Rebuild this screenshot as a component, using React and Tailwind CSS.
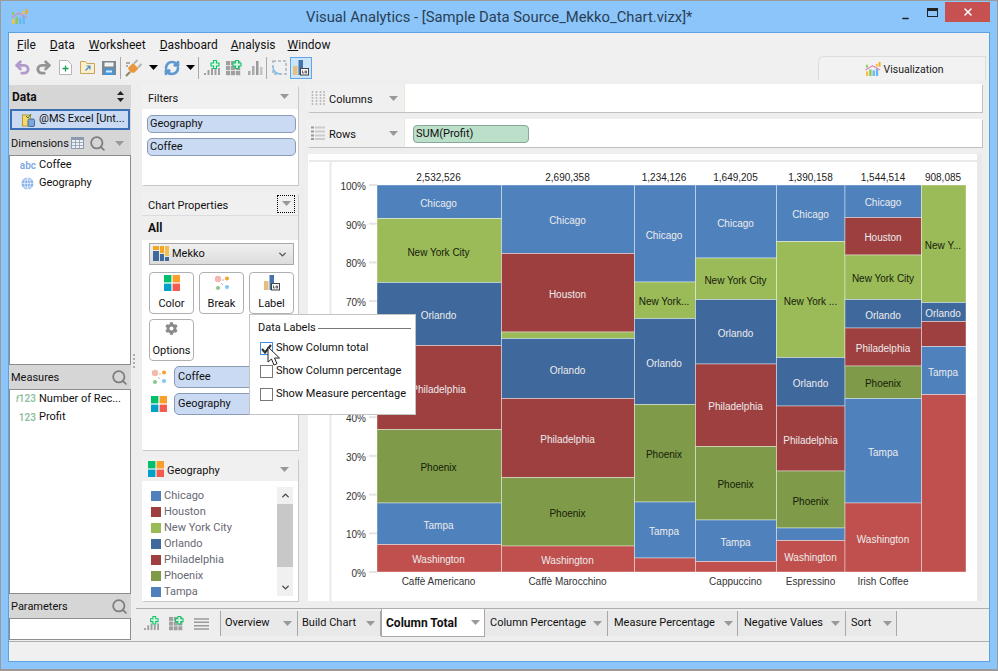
import { Search, Undo2, Redo2, RefreshCw, ChevronDown, ChevronUp, X, Minus } from 'lucide-react'
import { FaCog } from 'react-icons/fa'

// ── Chart data ─────────────────────────────────────
const cityColor = {
  Chicago:        '#4f81bd',
  Houston:        '#9d3f3f',
  'New York City':'#9bbb59',
  Orlando:        '#3f689c',
  Philadelphia:   '#9f4040',
  Phoenix:        '#7f9a48',
  Tampa:          '#4f81bd',
  Washington:     '#c0504d',
}

const darkText = ['New York City', 'Phoenix']

const columns = [
  { x0: 377, x1: 501.5, total: '2,532,526', cx: 438.5, name: 'Caffè Americano', segs: [
    [218.5, 'Chicago'], [282.5, 'New York City'], [345.5, 'Orlando'], [429.5, 'Philadelphia'],
    [503, 'Phoenix'], [544.5, 'Tampa'], [572, 'Washington'],
  ] },
  { x0: 501.5, x1: 634.5, total: '2,690,358', cx: 567.5, name: 'Caffè Marocchino', segs: [
    [253.5, 'Chicago'], [332, 'Houston'], [338.5, 'New York City', ''], [398.5, 'Orlando'],
    [477.5, 'Philadelphia'], [546, 'Phoenix'], [572, 'Washington'],
  ] },
  { x0: 634.5, x1: 695.5, total: '1,234,126', cx: 664, name: '', segs: [
    [282, 'Chicago'], [318.5, 'New York City', 'New York...'], [404.5, 'Orlando'], [502, 'Phoenix'],
    [558, 'Tampa'], [572, 'Washington', ''],
  ] },
  { x0: 695.5, x1: 776.5, total: '1,649,205', cx: 735.5, name: 'Cappuccino', segs: [
    [258, 'Chicago'], [299.5, 'New York City'], [364, 'Orlando'], [446.5, 'Philadelphia'],
    [520, 'Phoenix'], [561.5, 'Tampa'], [572, 'Washington', ''],
  ] },
  { x0: 776.5, x1: 845, total: '1,390,158', cx: 810.5, name: 'Espressino', segs: [
    [241.5, 'Chicago'], [357.5, 'New York City', 'New York ...'], [406, 'Orlando'], [471, 'Philadelphia'],
    [528, 'Phoenix'], [540.5, 'Tampa', ''], [572, 'Washington'],
  ] },
  { x0: 845, x1: 921.5, total: '1,544,514', cx: 883, name: 'Irish Coffee', segs: [
    [217.5, 'Chicago'], [255, 'Houston'], [299.5, 'New York City'], [328, 'Orlando'], [366, 'Philadelphia'],
    [398.5, 'Phoenix'], [503, 'Tampa'], [572, 'Washington'],
  ] },
  { x0: 921.5, x1: 966, total: '908,085', cx: 943, name: '', segs: [
    [302.5, 'New York City', 'New Y...'], [321.5, 'Orlando'], [346.5, 'Philadelphia', ''],
    [394.5, 'Tampa'], [572, 'Washington', ''],
  ] },
]

// 60% and 50% sit under the labels popup
const ticks = ['100%', '90%', '80%', '70%', '', '', '40%', '30%', '20%', '10%', '0%']

const legend = [
  ['Chicago', 'bg-[#4f81bd]'],
  ['Houston', 'bg-[#9d3f3f]'],
  ['New York City', 'bg-[#9bbb59]'],
  ['Orlando', 'bg-[#3f689c]'],
  ['Philadelphia', 'bg-[#9f4040]'],
  ['Phoenix', 'bg-[#7f9a48]'],
  ['Tampa', 'bg-[#4f81bd]'],
]

const tabs = [
  { label: 'Overview',           box: 'w-[77px] pl-[4px] pr-[5px]' },
  { label: 'Build Chart',        box: 'w-[83px] pl-[4px] pr-[5px]' },
  { label: 'Column Total',       box: 'w-[104px] pl-[4px] pr-[4px]', active: true },
  { label: 'Column Percentage',  box: 'w-[123px] pl-[5px] pr-[5px]' },
  { label: 'Measure Percentage', box: 'w-[130px] pl-[6px] pr-[4px]' },
  { label: 'Negative Values',    box: 'w-[108px] pl-[6px] pr-[5px]' },
  { label: 'Sort',               box: 'w-[51px] pl-[5px] pr-[4px]' },
]

// ── Small icons ────────────────────────────────────
function Caret({ className = 'text-[#999]' }) {
  return (
    <svg width="9" height="5" viewBox="0 0 9 5" className={className}>
      <path d="M0 0h9L4.5 5z" fill="currentColor" />
    </svg>
  )
}

function Logo({ size = 17 }) {
  return (
    <svg width={size} height={size} viewBox="0 0 17 17">
      <rect x="1" y="11" width="2.5" height="5" fill="#f5c04a" />
      <rect x="4.5" y="9" width="2.5" height="7" fill="#8cc665" />
      <rect x="8" y="10" width="2.5" height="6" fill="#6cb8ea" />
      <rect x="11.5" y="8" width="2.5" height="8" fill="#6cb8ea" />
      <rect x="14.5" y="1" width="2" height="5" fill="#f5a623" />
      <rect x="11.5" y="3" width="2" height="3" fill="#f5c04a" />
      <rect x="1" y="4" width="2" height="3" fill="#8cc665" />
      <path d="M0.5 9.5 8 5l8 4.5" fill="none" stroke="#d98cb8" strokeWidth="1.3" />
    </svg>
  )
}

function ColorGrid({ size = 16 }) {
  return (
    <svg width={size} height={size} viewBox="0 0 16 16">
      <rect width="7.4" height="7.4" fill="#00c06b" />
      <rect x="8.6" width="7.4" height="7.4" fill="#fb9f2b" />
      <rect y="8.6" width="7.4" height="7.4" fill="#00a0c8" />
      <rect x="8.6" y="8.6" width="7.4" height="7.4" fill="#f35b4f" />
    </svg>
  )
}

function BreakDots() {
  return (
    <svg width="16" height="16" viewBox="0 0 16 16">
      <circle cx="4" cy="4" r="3.2" fill="#f5b8ae" />
      <circle cx="13" cy="3.5" r="2" fill="#fb9f2b" />
      <circle cx="4" cy="13" r="2" fill="#8cc68c" />
      <circle cx="13" cy="12" r="2" fill="#80c8f5" />
      <path d="M8 5l2 0M7 8l2 2" stroke="#bbb" strokeWidth="1" />
    </svg>
  )
}

function LabelIcon({ size = 16 }) {
  return (
    <svg width={size} height={size} viewBox="0 0 16 16">
      <rect x="0" y="6" width="4.5" height="9" fill="#e6be80" />
      <rect x="5.5" y="0" width="4.5" height="15" fill="#4573ab" />
      <rect x="7.5" y="8.5" width="8" height="6.5" fill="#f4f4f4" stroke="#444" strokeWidth="1" />
      <path d="M9.5 10.5v2.5h1.5M12 11h1.5v2H12z" fill="none" stroke="#444" strokeWidth=".8" />
    </svg>
  )
}

function MekkoIcon() {
  return (
    <svg width="16" height="16" viewBox="0 0 16 16">
      <rect x="0" y="0" width="6" height="4" fill="#f5a623" />
      <rect x="0" y="5" width="6" height="10" fill="#3f689c" />
      <rect x="7" y="0" width="4" height="7" fill="#f5a623" />
      <rect x="7" y="8" width="4" height="7" fill="#3f689c" />
      <rect x="12" y="0" width="4" height="10" fill="#f5c04a" />
      <rect x="12" y="11" width="4" height="4" fill="#3f689c" />
    </svg>
  )
}

function BarsPlus({ color = '#a0a0a0', size = 16 }) {
  return (
    <svg width={size} height={size} viewBox="0 0 16 16">
      <rect x="0" y="13" width="2" height="2" fill={color} />
      <rect x="3.5" y="10" width="2" height="5" fill={color} />
      <rect x="7" y="8" width="2" height="7" fill={color} />
      <rect x="10.5" y="9" width="2" height="6" fill={color} />
      <rect x="14" y="8" width="2" height="7" fill={color} />
      <path d="M9.500 0.500h3v2.500h2.500v3h-2.500v2.500h-3V6H7V3h2.500z" fill="#d6f7e2" stroke="#10c468" strokeWidth="1.100" />
    </svg>
  )
}

function GridPlus({ color = '#a0a0a0', size = 16 }) {
  return (
    <svg width={size} height={size} viewBox="0 0 16 16">
      {[1, 6, 11].map((y) => [0, 5, 10].map((x) => (
        <rect key={`${x}-${y}`} x={x} y={y} width="4.200" height="4.200" fill={color} />
      )))}
      <path d="M9.500 0.500h3v2.500h2.500v3h-2.500v2.500h-3V6H7V3h2.500z" fill="#d6f7e2" stroke="#10c468" strokeWidth="1.100" />
    </svg>
  )
}

function GrayBars() {
  return (
    <svg width="15" height="16" viewBox="0 0 15 16">
      <rect x="0" y="11" width="2.500" height="4" fill="#aaa" />
      <rect x="4" y="6" width="2.500" height="9" fill="#aaa" />
      <rect x="8" y="1" width="2.500" height="14" fill="#9a9a9a" />
      <rect x="12" y="7" width="2.500" height="8" fill="#c4c4c4" />
    </svg>
  )
}

function Sep() {
  return <div className="w-px h-[22px] bg-[#a8a8a8]" />
}

function Tool({ children, className = '' }) {
  return <div className={`flex items-center justify-center shrink-0 ${className}`}>{children}</div>
}

// ── Toolbar ────────────────────────────────────────
function Toolbar() {
  return (
    <div className="h-[25px] bg-[#f0f0f0] flex items-center pl-[5px] relative">
      <Tool className="w-[17px]"><Undo2 size={17} strokeWidth={4} className="text-[#b09ccb]" /></Tool>
      <Tool className="w-[17px] ml-[4px]"><Redo2 size={17} strokeWidth={4} className="text-[#949494]" /></Tool>
      <Tool className="w-[14px] ml-[6px]">
        <svg width="13" height="15" viewBox="0 0 13 15">
          <path d="M.5.5h8l4 4v10H.5z" fill="#fff" stroke="#b4b4b4" />
          <path d="M6.500 5.500v6M3.500 8.500h6" stroke="#1f9d55" strokeWidth="1.300" />
        </svg>
      </Tool>
      <Tool className="w-[15px] ml-[8px]">
        <svg width="15" height="13" viewBox="0 0 15 13">
          <path d="M.5 12.500V.5h5l1.500 2h7.500v10z" fill="#fbeecb" stroke="#c8a45c" />
          <path d="M5.500 9.500l4-4M6.500 5h3.500v3.500" fill="none" stroke="#3f8fd8" strokeWidth="1.200" />
        </svg>
      </Tool>
      <Tool className="w-[14px] ml-[7px]">
        <svg width="14" height="14" viewBox="0 0 14 14">
          <rect width="14" height="14" fill="#7d8790" />
          <rect x="2.500" y="1.500" width="9" height="4" fill="#f4f4f4" />
          <rect x="2" y="7.500" width="10" height="6.500" fill="#4a94d8" />
          <rect x="4" y="9.500" width="6" height="2" fill="#d8ecfb" />
        </svg>
      </Tool>
      <div className="ml-[4px]"><Sep /></div>
      <Tool className="w-[17px] ml-[4px]">
        <svg width="17" height="18" viewBox="0 0 17 18">
          <path d="M1 17l4-4" stroke="#8a8a6a" strokeWidth="2.200" />
          <path d="M3 9l5-5 5.500 5.500-4 4Q5 15 3 9z" fill="#e8963c" />
          <path d="M9 4.500l3.500-3.500M13 8.500L16.500 5" stroke="#b4b4b4" strokeWidth="2" />
          <path d="M1 4h4M1 7h2" stroke="#666" strokeWidth="1.200" />
        </svg>
      </Tool>
      <Tool className="ml-[7px]"><Caret className="text-black" /></Tool>
      <Tool className="w-[16px] ml-[6px]"><RefreshCw size={16} strokeWidth={4} className="text-[#5f97cf]" /></Tool>
      <Tool className="ml-[6px]"><Caret className="text-black" /></Tool>
      <div className="ml-[3px]"><Sep /></div>
      <Tool className="w-[16px] ml-[5px]"><BarsPlus /></Tool>
      <Tool className="w-[16px] ml-[6px]"><GridPlus /></Tool>
      <Tool className="w-[15px] ml-[6px]"><GrayBars /></Tool>
      <div className="ml-[3px]"><Sep /></div>
      <Tool className="w-[16px] ml-[5px]">
        <svg width="16" height="15" viewBox="0 0 16 15">
          <rect x="1" y="1" width="13" height="13" fill="none" stroke="#a8b4c0" strokeWidth="1.500" strokeDasharray="3 2" />
          <path d="M1 6q0 8 8 8" fill="none" stroke="#7fc0f0" strokeWidth="1.500" />
        </svg>
      </Tool>
      <Tool className="w-[22px] h-[22px] ml-[2px] bg-[#cce4f7] border border-[#5ea5ea]"><LabelIcon /></Tool>

      {/* Visualization tab */}
      <div className="absolute left-[809px] top-[1px] w-[168px] h-[24px] bg-[#f2f2f2] border-l border-t border-r border-[#dcdcdc] rounded-tl-[6px] flex items-center justify-center gap-[3px] pl-[4px] text-[10.5px] text-[#1a1a1a]">
        <Logo size={16} />
        <span className="pt-[2px]">Visualization</span>
      </div>
    </div>
  )
}

// ── Left panel ─────────────────────────────────────
function SideHeader({ children }) {
  return (
    <div className="h-[24px] bg-[#d6d6d6] flex items-center px-[2px] text-[11px] text-[#111]">{children}</div>
  )
}

function LeftPanel() {
  return (
    <div className="w-[122px] shrink-0 pt-[5px] flex flex-col">
      <div className="h-[23px] bg-[#d6d6d6] flex items-center justify-between px-[3px] pr-[7px] font-bold text-[12px] text-[#111]">
        <span>Data</span>
        <svg width="7" height="11" viewBox="0 0 7 11"><path d="M3.500 0L7 4H0zM3.500 11L0 7h7z" fill="#222" /></svg>
      </div>
      <div className="h-[23px] bg-[#d6d6d6] px-[1px] py-[1px]">
        <div className="h-full bg-[#c9daf2] border-2 border-[#3a6fb5] flex items-center pl-[10px] gap-[4px] text-[11px] text-[#111]">
          <svg width="13" height="14" viewBox="0 0 13 14" className="shrink-0">
            <rect x=".5" y="2" width="8" height="11" fill="#f8d96b" stroke="#b8983c" />
            <rect x="6" y="6" width="6.500" height="7.500" rx="1.500" fill="#7ca8d8" stroke="#3f689c" />
            <path d="M4 3l2 2 3-4" fill="none" stroke="#2f7d3c" strokeWidth="1" />
          </svg>
          <span className="whitespace-nowrap">@MS Excel [Unt...</span>
        </div>
      </div>
      <SideHeader>
        <span className="pt-[3px]">Dimensions</span>
        <svg width="13" height="12" viewBox="0 0 13 12" className="ml-[2px]">
          <rect x=".5" y=".5" width="12" height="11" fill="#f0f0f0" stroke="#8a9bb0" />
          <rect x=".5" y=".5" width="12" height="2.500" fill="#8a9bb0" />
          <path d="M4.500 3v8M8.500 3v8M1 5.500h11M1 8.500h11" stroke="#8a9bb0" strokeWidth=".8" />
        </svg>
        <Search size={17} strokeWidth={2.500} className="text-[#7d7d7d] ml-[5px]" />
        <div className="ml-[9px]"><Caret /></div>
      </SideHeader>
      <div className="h-[210px] bg-white border border-[#8d8d8d] flex flex-col text-[11px] text-[#111]">
        <div className="h-[18px] flex items-center">
          <span className="w-[29px] text-right pr-[3px] text-[#7fa8e0] font-semibold text-[10px]">abc</span>
          <span>Coffee</span>
        </div>
        <div className="h-[18px] flex items-center">
          <div className="w-[29px] flex justify-end pr-[5px]">
            <svg width="13" height="13" viewBox="0 0 13 13">
              <circle cx="6.500" cy="6.500" r="6" fill="#8ab4ea" />
              <path d="M.5 6.500h12M6.500.5v12M2 3h9M2 10h9M6.500.5c-4 3-4 9 0 12M6.500.5c4 3 4 9 0 12" fill="none" stroke="#fff" strokeWidth=".6" />
            </svg>
          </div>
          <span>Geography</span>
        </div>
      </div>
      <SideHeader>
        <span className="flex-1 pt-[3px]">Measures</span>
        <Search size={17} strokeWidth={2.500} className="text-[#7d7d7d] mr-[1px]" />
      </SideHeader>
      <div className="h-[205px] bg-white border border-[#8d8d8d] flex flex-col text-[11px] text-[#111]">
        <div className="h-[18px] flex items-center">
          <span className="w-[29px] text-right pr-[3px] text-[#8fbfa0] font-semibold text-[10px]">
            <span className="italic text-[9px]">f</span>123
          </span>
          <span className="whitespace-nowrap">Number of Rec...</span>
        </div>
        <div className="h-[18px] flex items-center">
          <span className="w-[29px] text-right pr-[3px] text-[#8fbfa0] font-semibold text-[10px]">123</span>
          <span>Profit</span>
        </div>
      </div>
      <SideHeader>
        <span className="flex-1 pt-[3px]">Parameters</span>
        <Search size={17} strokeWidth={2.500} className="text-[#7d7d7d] mr-[1px]" />
      </SideHeader>
      <div className="h-[22px] bg-white border border-[#8d8d8d]" />
    </div>
  )
}

// ── Middle panel ───────────────────────────────────
function Chip({ children, className = 'h-[18px]' }) {
  return (
    <div className={`bg-[#c9daf2] border border-[#8a9bb5] rounded-[5px] flex items-center pl-[2px] pt-[1px] text-[11px] text-[#111] ${className}`}>
      {children}
    </div>
  )
}

function PropButton({ icon, label }) {
  return (
    <div className="w-[45px] h-[42px] shrink-0 bg-white border border-[#b0b0b0] rounded-[4px] flex flex-col items-center justify-end gap-[5px] pb-[1px] text-[11px] text-[#111]">
      {icon}
      <span>{label}</span>
    </div>
  )
}

function MiddlePanel() {
  return (
    <div className="w-[156px] shrink-0 pt-[4px] flex flex-col gap-[7px]">
      <div className="h-[101px] bg-white rounded-t-[4px] shadow-[1px_1px_0_#c8c8c8]">
        <div className="h-[25px] bg-[#f0f0f0] rounded-t-[4px] flex items-center justify-between pl-[6px] pr-[9px] text-[11px] text-[#111]">
          <span className="pt-[5px]">Filters</span>
          <Caret />
        </div>
        <div className="pl-[5px] pr-[2px] pt-[6px] flex flex-col gap-[5px]">
          <Chip>Geography</Chip>
          <Chip>Coffee</Chip>
        </div>
      </div>

      <div className="h-[258px] bg-white rounded-t-[4px] shadow-[1px_1px_0_#c8c8c8]">
        <div className="h-[24px] bg-[#f0f0f0] rounded-t-[4px] flex items-center justify-between pl-[6px] pr-[3px] text-[11px] text-[#111] border-b border-[#dcdcdc]">
          <span className="pt-[5px]">Chart Properties</span>
          <div className="w-[18px] h-[18px] border border-dotted border-black flex items-center justify-center"><Caret /></div>
        </div>
        <div className="h-[24px] bg-[#eeeeef] flex items-center pl-[6px] font-bold text-[12px] text-[#111]">All</div>
        <div className="pl-[7px] pr-[4px] pt-[3px]">
          <div className="h-[22px] bg-gradient-to-b from-[#f0f0f0] to-[#dcdcdc] border border-[#a8a8a8] flex items-center pl-[3px] pr-[5px] gap-[3px] text-[11px] text-[#111]">
            <MekkoIcon />
            <span className="flex-1 pt-[1px]">Mekko</span>
            <ChevronDown size={11} strokeWidth={3} className="text-[#555]" />
          </div>
          <div className="flex gap-[5px] mt-[7px]">
            <PropButton icon={<ColorGrid />} label="Color" />
            <PropButton icon={<BreakDots />} label="Break" />
            <PropButton icon={<LabelIcon />} label="Label" />
          </div>
          <div className="mt-[5px]">
            <PropButton icon={<FaCog size={13} className="text-[#8a8a8a] mb-[3px]" />} label="Options" />
          </div>
        </div>
        <div className="pl-[9px] pr-[5px] pt-[5px] flex flex-col gap-[5px]">
          <div className="flex items-center gap-[7px]">
            <BreakDots />
            <Chip className="flex-1 h-[22px] pl-[3px]">Coffee</Chip>
          </div>
          <div className="flex items-center gap-[7px]">
            <ColorGrid />
            <Chip className="flex-1 h-[22px] pl-[3px]">Geography</Chip>
          </div>
        </div>
      </div>

      <div className="h-[144px] bg-white rounded-t-[4px] shadow-[1px_1px_0_#c8c8c8]">
        <div className="h-[24px] bg-[#f0f0f0] rounded-t-[4px] flex items-center pl-[6px] pr-[9px] gap-[3px] text-[11px] text-[#111]">
          <ColorGrid />
          <span className="flex-1 pt-[4px]">Geography</span>
          <Caret />
        </div>
        <div className="flex pl-[9px] pr-[5px] pt-[6px]">
          <div className="flex-1 flex flex-col pt-[1px]">
            {legend.map(([name, swatch]) => (
              <div key={name} className="h-[16px] flex items-center gap-[3px] text-[11px] text-[#686873]">
                <div className={`w-[10px] h-[10px] ${swatch}`} />
                <span>{name}</span>
              </div>
            ))}
          </div>
          <div className="w-[16px] h-[109px] bg-[#f0f0f0] flex flex-col items-center">
            <ChevronUp size={11} strokeWidth={3} className="text-[#444] h-[17px]" />
            <div className="w-full h-[63px] bg-[#c8c8c8]" />
            <div className="flex-1" />
            <ChevronDown size={11} strokeWidth={3} className="text-[#444] h-[17px]" />
          </div>
        </div>
      </div>
    </div>
  )
}

// ── Shelf rows ─────────────────────────────────────
function Shelf({ label, icon, children }) {
  return (
    <div className="h-[28px] bg-white rounded-l-[4px] shadow-[1px_1px_0_#c0c0c0] flex">
      <div className="w-[99px] bg-[#f0f0f0] rounded-l-[4px] border-r border-[#ece8d8] flex items-center pl-[5px] pr-[6px] gap-[4px] text-[11px] text-[#111]">
        {icon}
        <span className="flex-1 pt-[5px]">{label}</span>
        <Caret />
      </div>
      {children}
    </div>
  )
}

// ── Mekko chart ────────────────────────────────────
function Chart() {
  return (
    <svg viewBox="308 154 669 447" className="w-[669px] h-[447px] block bg-white font-['Liberation_Sans',sans-serif] text-[10px]">
      <path d="M309 161H977M330.500 161V601" stroke="#e9e9e9" strokeWidth="2" fill="none" />
      {ticks.map((t, i) => {
        const y = 185 + i * 38.7
        return (
          <g key={i}>
            <rect x="369" y={y - 1} width="8" height="2" fill="#e4e4e4" />
            {t && <text x="366" y={y + 5} textAnchor="end" fill="#333">{t}</text>}
          </g>
        )
      })}
      {columns.map((c) => {
        let top = 185
        const cells = c.segs.map(([end, city, label]) => {
          const y0 = top
          top = end
          const text = label === undefined ? city : label
          return (
            <g key={city}>
              <rect x={c.x0} y={y0} width={c.x1 - c.x0} height={end - y0} fill={cityColor[city]} stroke="#ffffff" strokeOpacity=".4" strokeWidth="1" />
              {text && (
                <text x={c.cx} y={(y0 + end) / 2 + 5} textAnchor="middle" fill={darkText.includes(city) ? '#15200a' : '#ececec'}>
                  {text}
                </text>
              )}
            </g>
          )
        })
        return (
          <g key={c.total}>
            {cells}
            <text x={c.cx} y="181" textAnchor="middle" fill="#222">{c.total}</text>
            {c.name && <text x={c.cx} y="585" textAnchor="middle" fill="#333">{c.name}</text>}
          </g>
        )
      })}
    </svg>
  )
}

// ── Bottom tabs ────────────────────────────────────
function TabBar() {
  return (
    <div className="h-[33px] ml-[5px] border-t border-[#aeaeae] flex items-start pl-[8px] pt-[2px]">
      <div className="w-[76px] h-[25px] flex items-center gap-[10px]">
        <BarsPlus size={15} />
        <GridPlus size={15} />
        <svg width="15" height="12" viewBox="0 0 15 12">
          <path d="M0 1h15M0 4.300h15M0 7.700h15M0 11h15" stroke="#9a9a9a" strokeWidth="1.500" />
        </svg>
      </div>
      <div className="w-px h-[25px] bg-[#a8a8a8]" />
      {tabs.map((t) => (
        <div
          key={t.label}
          className={
            t.active
              ? `${t.box} h-[28px] -mt-[2px] bg-white border-x border-b border-[#a8a8a8] flex items-center justify-between font-bold text-[12px] text-[#111] shrink-0`
              : `${t.box} h-[25px] bg-[#e9e9e9] border-r border-[#a8a8a8] flex items-center justify-between text-[11px] text-[#111] shrink-0`
          }
        >
          <span>{t.label}</span>
          <Caret />
        </div>
      ))}
    </div>
  )
}

// ── Popup + cursor ─────────────────────────────────
function Check({ checked, label }) {
  return (
    <div className="h-[23px] flex items-center gap-[3px] text-[11px] text-[#111]">
      <div className={`w-[13px] h-[13px] border bg-white flex items-center justify-center ${checked ? 'border-[#3d8fe0]' : 'border-[#777]'}`}>
        {checked && (
          <svg width="11" height="10" viewBox="0 0 11 10">
            <path d="M1 5l3 3.500L10 1" fill="none" stroke="#333" strokeWidth="2.200" />
          </svg>
        )}
      </div>
      <span className="whitespace-nowrap">{label}</span>
    </div>
  )
}

function LabelsPopup() {
  return (
    <div className="absolute left-[248px] top-[313px] w-[167px] h-[101px] bg-white border border-[#c4c4c4] pl-[8px] pr-[4px] pt-[5px]">
      <div className="flex items-center gap-[2px] h-[16px] text-[11px] text-[#111]">
        <span className="whitespace-nowrap">Data Labels</span>
        <div className="flex-1 h-px bg-[#777]" />
      </div>
      <div className="flex flex-col pt-[1px] pl-[2px]">
        <Check checked label="Show Column total" />
        <Check label="Show Column percentage" />
        <Check label="Show Measure percentage" />
      </div>
    </div>
  )
}

function Cursor() {
  return (
    <svg width="14" height="21" viewBox="0 0 14 21" className="absolute left-[266px] top-[345px]">
      <path d="M1 1v15l3.500-3 2.500 6 3-1.300-2.500-5.700H12.500z" fill="#fff" stroke="#222" strokeWidth="1" />
    </svg>
  )
}

// ── Page ───────────────────────────────────────────
export default function App() {
  return (
    <div className="relative w-[998px] h-[671px] overflow-hidden bg-[#8bc5f9] border-t border-x border-b-2 border-[#9a9a9a] font-[Roboto,sans-serif]">
      {/* Title bar */}
      <div className="h-[31px] flex items-center relative">
        <div className="ml-[10px]"><Logo /></div>
        <div className="absolute left-[305px] top-[6px] text-[14.8px] leading-[20px] text-[#2a3f55] whitespace-nowrap">
          Visual Analytics - [Sample Data Source_Mekko_Chart.vizx]*
        </div>
        <div className="absolute left-[900px] top-[13px]"><Minus size={9} strokeWidth={4} className="text-[#222]" /></div>
        <div className="absolute left-[926px] top-[7px] w-[11px] h-[9px] border border-t-[3px] border-[#222]" />
        <div className="absolute left-[944px] top-[1px] w-[45px] h-[20px] bg-[#c75050] flex items-center justify-center">
          <X size={12} strokeWidth={3} className="text-white" />
        </div>
      </div>

      {/* Client area */}
      <div className="mx-[7px] w-[982px] h-[630px] border border-[#5fa0e0] bg-[#eeeeee] flex flex-col">
        <div className="h-[22px] bg-[#f0f0f0] flex items-center pl-[8px] pt-[2px] gap-[14px] text-[12px] text-[#111]">
          <span><span className="underline">F</span>ile</span>
          <span><span className="underline">D</span>ata</span>
          <span><span className="underline">W</span>orksheet</span>
          <span><span className="underline">D</span>ashboard</span>
          <span className="-ml-[1px]"><span className="underline">A</span>nalysis</span>
          <span className="-ml-[2px]"><span className="underline">W</span>indow</span>
        </div>
        <Toolbar />
        <div className="h-[561px] flex">
          <LeftPanel />
          <div className="flex-1 flex flex-col min-w-0">
            <div className="h-[528px] flex">
              <div className="w-[11px] shrink-0 flex items-center pl-[2px] pt-[34px]">
                <div className="w-[2px] h-[14px] border-l-2 border-dotted border-[#b0b0b0]" />
              </div>
              <MiddlePanel />
              <div className="w-[676px] ml-[8px] shrink-0 pt-[4px] flex flex-col gap-[7px]">
                <Shelf
                  label="Columns"
                  icon={
                    <svg width="14" height="14" viewBox="0 0 14 14">
                      <path d="M1.500 0v14M5.500 0v14M9.500 0v14M13 0v14" stroke="#bbb" strokeWidth="1.600" strokeDasharray="2 1" />
                    </svg>
                  }
                />
                <Shelf
                  label="Rows"
                  icon={
                    <svg width="14" height="14" viewBox="0 0 14 14">
                      <path d="M0 1.500h3M0 5.500h3M0 9.500h3M0 13h3" stroke="#999" strokeWidth="1.800" />
                      <path d="M4 1.500h10M4 5.500h10M4 9.500h10M4 13h10" stroke="#ccc" strokeWidth="1.800" />
                    </svg>
                  }
                >
                  <div className="ml-[8px] mt-[6px] w-[116px] h-[18px] bg-[#bcdfc9] border border-[#8aa898] rounded-[4px] flex items-center pl-[2px] text-[11px] text-[#111]">
                    SUM(Profit)
                  </div>
                </Shelf>
                <div className="ml-[2px] w-[674px] bg-[#e9e9e9] pr-[5px]">
                  <Chart />
                </div>
              </div>
            </div>
            <TabBar />
          </div>
        </div>
        <div className="flex-1 border-t border-[#aeaeae] bg-[#f0f0f0]" />
      </div>

      <LabelsPopup />
      <Cursor />
    </div>
  )
}
